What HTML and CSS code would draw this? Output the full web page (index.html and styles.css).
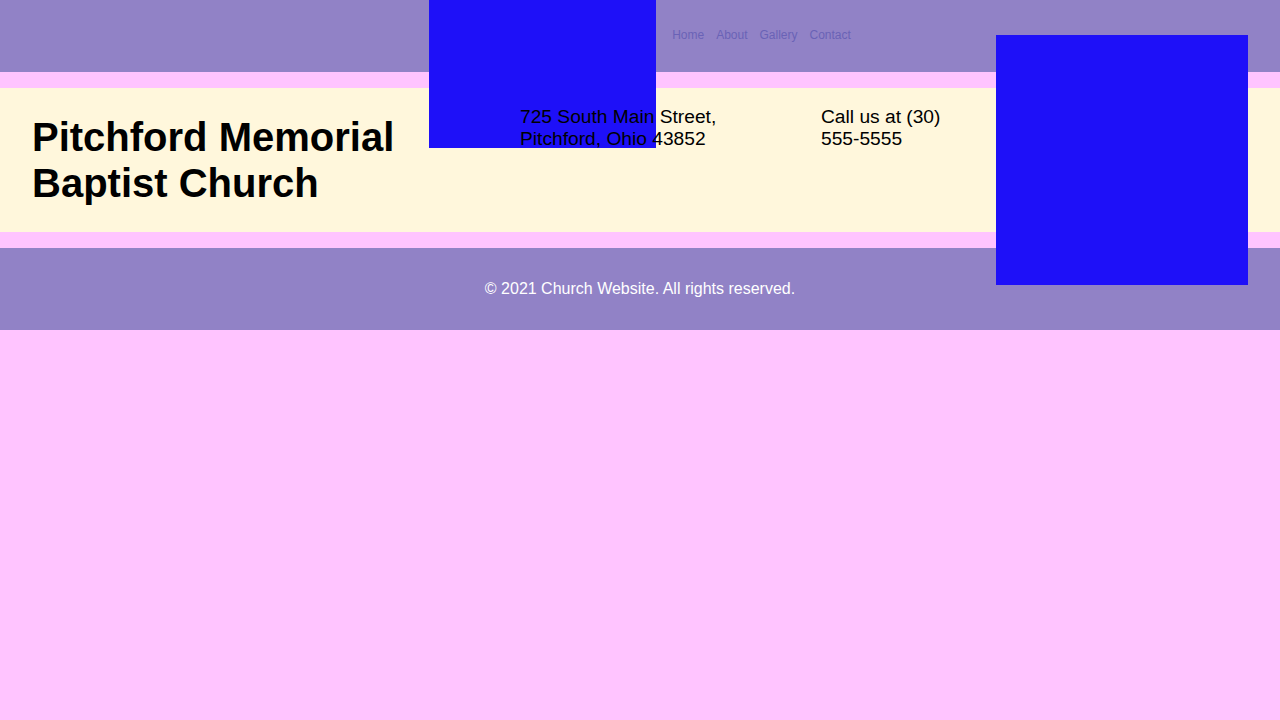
FILE: index.html
```html
<!DOCTYPE html>
<html lang="en">
<head>
<meta charset="utf-8">
<title>Pitchford Memorial Baptist Church</title>
<link rel="stylesheet" href="styles.css">
</head>
<body>
<header class="site-header">
  <div class="logo" aria-label="Logo"></div>
  <nav class="nav">
    <a href="#">Home</a>
    <a href="#">About</a>
    <a href="#">Gallery</a>
    <a href="#">Contact</a>
  </nav>
</header>
<section class="band">
  <h1 class="title">Pitchford Memorial Baptist Church</h1>
  <p class="info">725 South Main Street, Pitchford, Ohio 43852</p>
  <p class="info">Call us at (30) 555-5555</p>
  <div class="photo-cell"><div class="photo"></div></div>
</section>
<footer class="site-footer">
  <p>© 2021 Church Website. All rights reserved.</p>
</footer>
</body>
</html>
```
FILE: styles.css
```css
* { box-sizing: border-box; }
body {
  margin: 0;
  background: #ffc4ff;
  font-family: "Liberation Sans", Arial, sans-serif;
  color: #000;
}
.site-header {
  height: 72px;
  background: #9182c6;
  display: flex;
  justify-content: center;
  align-items: flex-start;
  gap: 16px;
  margin-bottom: 16px;
}
.logo {
  width: 227px;
  height: 148px;
  flex: none;
  background: #1e10f8;
  position: relative;
  z-index: 1;
}
.nav {
  display: flex;
  gap: 12px;
  padding-top: 28px;
  font-size: 12px;
  line-height: 14px;
}
.nav a {
  color: #6a62b6;
  text-decoration: none;
}
.band {
  background: #fff7dc;
  display: grid;
  grid-template-columns: 456px 269px 143px 252px;
  column-gap: 32px;
  padding: 18px 32px;
  margin-bottom: 16px;
  position: relative;
}
.title {
  margin: 8px 0;
  font-size: 40px;
  line-height: 46px;
  font-weight: bold;
  position: relative;
  z-index: 2;
}
.info {
  margin: 0;
  font-size: 19.2px;
  line-height: 22px;
  position: relative;
  z-index: 2;
}
.photo-cell { position: relative; }
.photo {
  position: absolute;
  left: 0;
  top: -71px;
  width: 252px;
  height: 250px;
  background: #1e10f8;
  z-index: 3;
}
.site-footer {
  background: #9182c6;
  color: #fff;
  text-align: center;
  padding: 32px;
}
.site-footer p {
  margin: 0;
  font-size: 16px;
  line-height: 18px;
}
```
